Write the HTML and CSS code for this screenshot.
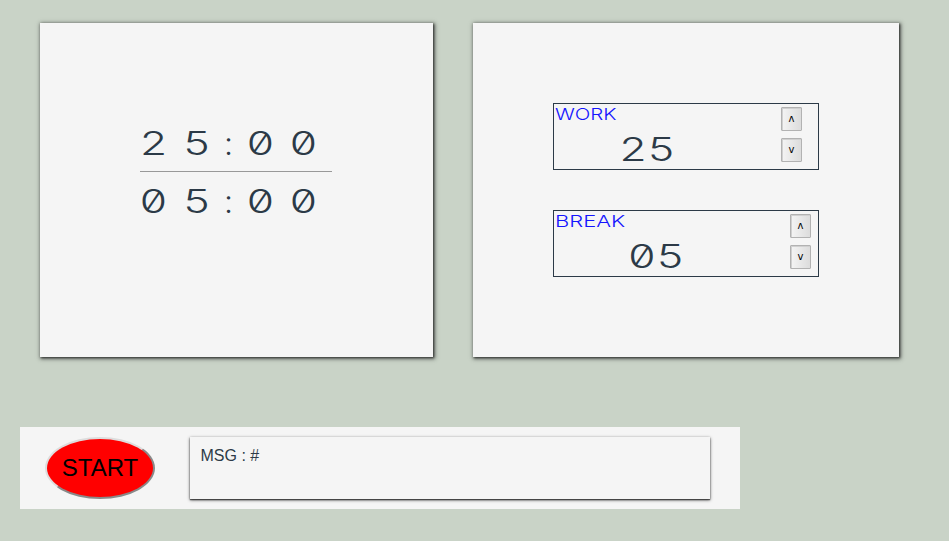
FILE: index.html
```html
<!DOCTYPE html>
<html lang="en">
<head>
<meta charset="utf-8">
<title>Timer</title>
<link rel="stylesheet" href="styles.css">
</head>
<body>
<main class="panels">
  <section class="panel clock">
    <div class="time"><span>2</span><span>5</span><span class="colon">:</span><span>0</span><span>0</span></div>
    <hr class="rule">
    <div class="time"><span>0</span><span>5</span><span class="colon">:</span><span>0</span><span>0</span></div>
  </section>
  <section class="panel settings">
    <div class="setting work">
      <div class="label"><span>WORK</span></div>
      <div class="value"><span>2</span><span>5</span></div>
      <div class="steps"><button class="step">ʌ</button><button class="step">v</button></div>
    </div>
    <div class="setting break">
      <div class="label"><span>BREAK</span></div>
      <div class="value"><span>0</span><span>5</span></div>
      <div class="steps"><button class="step">ʌ</button><button class="step">v</button></div>
    </div>
  </section>
</main>
<footer class="controls">
  <button class="start">START</button>
  <div class="message">MSG : #</div>
</footer>
</body>
</html>
```
FILE: styles.css
```css
* { box-sizing: border-box; }
body {
  margin: 0;
  height: 541px;
  overflow: hidden;
  background: #c9d3c7;
  color: #2c3a47;
  font-family: "Liberation Sans", Arial, sans-serif;
}
.panels { display: flex; gap: 40px; padding: 23px 0 0 40px; }
.panel {
  height: 334px;
  background: #f5f5f5;
  box-shadow: 1px 1px 4px 1px rgba(0, 0, 0, .5), 1px 1px 2px rgba(0, 0, 0, .55);
}
.clock { width: 393px; padding: 101px 0 0 92px; }
.time {
  display: flex;
  height: 40px;
  font: 350 32px/40px Inter, sans-serif;
  font-feature-settings: "zero" 1;
}
.time span, .value span {
  flex: none;
  width: 43px;
  text-align: center;
  transform: scaleX(1.38);
}
.time .colon { width: 21px; font-weight: 300; transform: none; }
.rule {
  width: 192px;
  height: 1px;
  margin: 7px 0 10px 8px;
  border: 0;
  background: #999;
}
.settings { width: 426px; padding: 80px 0 0 80px; }
.setting {
  display: grid;
  grid-template-columns: 65px 58px 1fr auto;
  width: 266px;
  height: 67px;
  margin-bottom: 40px;
  border: 1px solid #2c3a47;
}
.label {
  grid-area: 1 / 1;
  padding: 0 0 0 1px;
  color: #1414ff;
  font: 300 16px/20px Inter, sans-serif;
}
.label span { display: inline-block; transform-origin: left; transform: scaleX(1.28); }
.break .label span { transform: scaleX(1.37); }
.value {
  grid-area: 1 / 2;
  display: flex;
  padding-top: 26px;
  font: 350 32px/40px Inter, sans-serif;
  font-feature-settings: "zero" 1;
}
.value span { width: 28px; }
.break .value { padding-left: 9px; }
.steps {
  grid-area: 1 / 4;
  display: flex;
  flex-direction: column;
  gap: 7px;
  padding: 3px 16px 0 0;
}
.break .steps { padding-right: 7px; }
.step {
  width: 21px;
  height: 24px;
  padding: 0;
  border: 1px solid #b2b2b2;
  border-radius: 1px;
  background: linear-gradient(90deg, #f4f4f4, #dcdcdc);
  box-shadow: inset 1px 1px #d0d0d0;
  color: #000;
  font: 10px/22px "DejaVu Sans", sans-serif;
}
.controls {
  display: flex;
  width: 720px;
  height: 82px;
  margin: 70px 0 0 20px;
  padding: 10px 0 0 25px;
  background: #f5f5f5;
}
.start {
  width: 110px;
  height: 62px;
  margin-right: 35px;
  padding: 0;
  border: 2px outset #ddd;
  border-radius: 50%;
  background: #f00;
  color: #000;
  font: 24px "Liberation Sans", Arial, sans-serif;
}
.message {
  width: 520px;
  height: 62px;
  padding: 9px 10.5px;
  box-shadow: 0 1px 3px rgba(0, 0, 0, .7), 0 1px 1px rgba(0, 0, 0, .5);
  background: #f5f5f5;
  font-size: 16px;
  line-height: 19px;
}
```
